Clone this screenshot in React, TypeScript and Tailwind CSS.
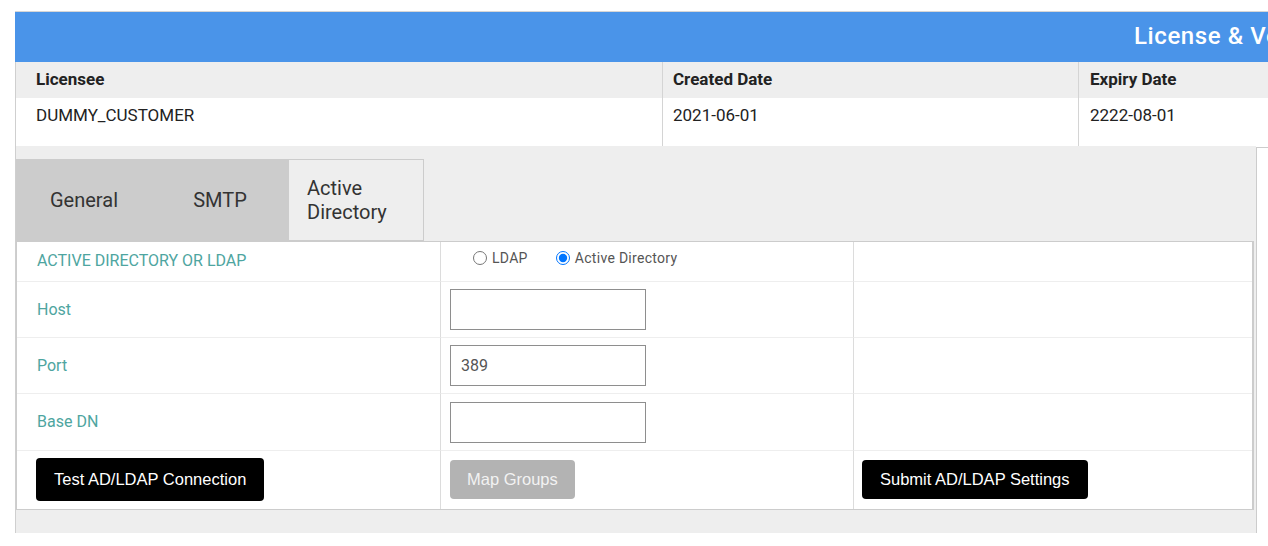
import React from 'react';

const labelCls = "flex items-center pl-[20px] text-[16px] text-[#4ea5a0]";
const btnBlack = "bg-black text-white rounded-[4px] px-[18px] text-[16.5px] font-['Liberation_Sans',Arial,sans-serif]";
const cellR = "border-t border-l border-[#eeeeee] border-l-[#dcdcdc]";
const inputCls = "w-[196px] h-[41px] border border-[#8e8e8e] px-[10px] text-[16px] text-[#555] outline-none";

export default function App() {
  return (
    <div className="w-[1268px] h-[546px] overflow-hidden bg-white font-['Roboto','Liberation_Sans',sans-serif] text-[#222]">
      <div className="ml-[15px] mt-[11px] w-[1420px] border-t border-[#d6d6d6]">
        {/* Title bar */}
        <div className="h-[50px] bg-[#4a94e9] flex items-center pl-[1119px] pb-[3px] whitespace-nowrap">
          <span className="text-white text-[24px] font-medium tracking-[0.6px]">License &amp; Version Details</span>
        </div>

        <div className="border-l border-[#cfcfcf]">
          {/* License table */}
          <div className="grid grid-cols-[646px_416px_1fr] text-[17px]">
            <div className="h-[36px] bg-[#eeeeee] flex items-center pl-[20px] font-bold">Licensee</div>
            <div className="h-[36px] bg-[#eeeeee] flex items-center pl-[10px] font-bold border-l border-[#d4d4d4]">Created Date</div>
            <div className="h-[36px] bg-[#eeeeee] flex items-center pl-[11px] font-bold border-l border-[#d4d4d4]">Expiry Date</div>
            <div className="h-[48px] pt-[5px] pl-[20px] leading-[24px]">DUMMY_CUSTOMER</div>
            <div className="h-[48px] pt-[5px] pl-[10px] leading-[24px] border-l border-[#d4d4d4]">2021-06-01</div>
            <div className="h-[48px] pt-[5px] pl-[11px] leading-[24px] border-l border-[#d4d4d4]">2222-08-01</div>
          </div>

          <div className="flex">
            {/* Settings panel */}
            <div className="w-[1240px] bg-[#eeeeee] pt-[13px] pb-[23px]">
              <div className="flex h-[82px] text-[20px] text-[#333]">
                <div className="w-[136px] bg-[#cccccc] flex items-center justify-center">General</div>
                <div className="w-[136px] bg-[#cccccc] flex items-center justify-center">SMTP</div>
                <div className="w-[136px] bg-[#eeeeee] border border-[#cccccc] flex items-center pl-[18px] leading-[24px]">
                  Active<br />Directory
                </div>
              </div>

              <div className="w-[1238px] bg-white border border-[#cccccc] border-r-2 grid grid-cols-[423px_413px_1fr]">
                {/* Row 1 */}
                <div className={`${labelCls} h-[39px] uppercase pb-[2px]`}>Active Directory or LDAP</div>
                <div className="h-[39px] border-l border-[#dcdcdc] flex items-center pl-[32px] pb-[7px] text-[14px] text-[#555] tracking-[0.3px]">
                  <label className="flex items-center gap-[5px]">
                    <input type="radio" name="dir" className="m-0 w-[14px] h-[14px]" readOnly />
                    LDAP
                  </label>
                  <label className="flex items-center gap-[5px] ml-[28px]">
                    <input type="radio" name="dir" defaultChecked className="m-0 w-[14px] h-[14px]" />
                    Active Directory
                  </label>
                </div>
                <div className="h-[39px] border-l border-[#dcdcdc]"></div>

                {/* Host */}
                <div className={`${labelCls} h-[56px] border-t border-[#eeeeee]`}>Host</div>
                <div className={`${cellR} h-[56px] flex items-center pl-[9px]`}>
                  <input className={inputCls} />
                </div>
                <div className={`${cellR} h-[56px]`}></div>

                {/* Port */}
                <div className={`${labelCls} h-[56px] border-t border-[#eeeeee]`}>Port</div>
                <div className={`${cellR} h-[56px] flex items-center pl-[9px]`}>
                  <input defaultValue="389" className={inputCls} />
                </div>
                <div className={`${cellR} h-[56px]`}></div>

                {/* Base DN */}
                <div className={`${labelCls} h-[57px] border-t border-[#eeeeee]`}>Base DN</div>
                <div className={`${cellR} h-[57px] flex items-center pl-[9px]`}>
                  <input className={inputCls} />
                </div>
                <div className={`${cellR} h-[57px]`}></div>

                {/* Buttons */}
                <div className="h-[59px] border-t border-[#eeeeee] flex items-start pt-[7px] pl-[19px]">
                  <button className={`${btnBlack} h-[43px]`}>Test AD/LDAP Connection</button>
                </div>
                <div className={`${cellR} h-[59px] flex items-start pt-[9px] pl-[9px]`}>
                  <button className="h-[39px] bg-[#b3b3b3] text-[#f2f2f2] rounded-[4px] px-[17px] text-[16.5px] font-['Liberation_Sans',Arial,sans-serif]">Map Groups</button>
                </div>
                <div className={`${cellR} h-[59px] flex items-start pt-[9px] pl-[8px]`}>
                  <button className={`${btnBlack} h-[39px]`}>Submit AD/LDAP Settings</button>
                </div>
              </div>
            </div>
            <div className="flex-1 mt-px border-l border-t border-[#cccccc] bg-white"></div>
          </div>
        </div>
      </div>
    </div>
  );
}
